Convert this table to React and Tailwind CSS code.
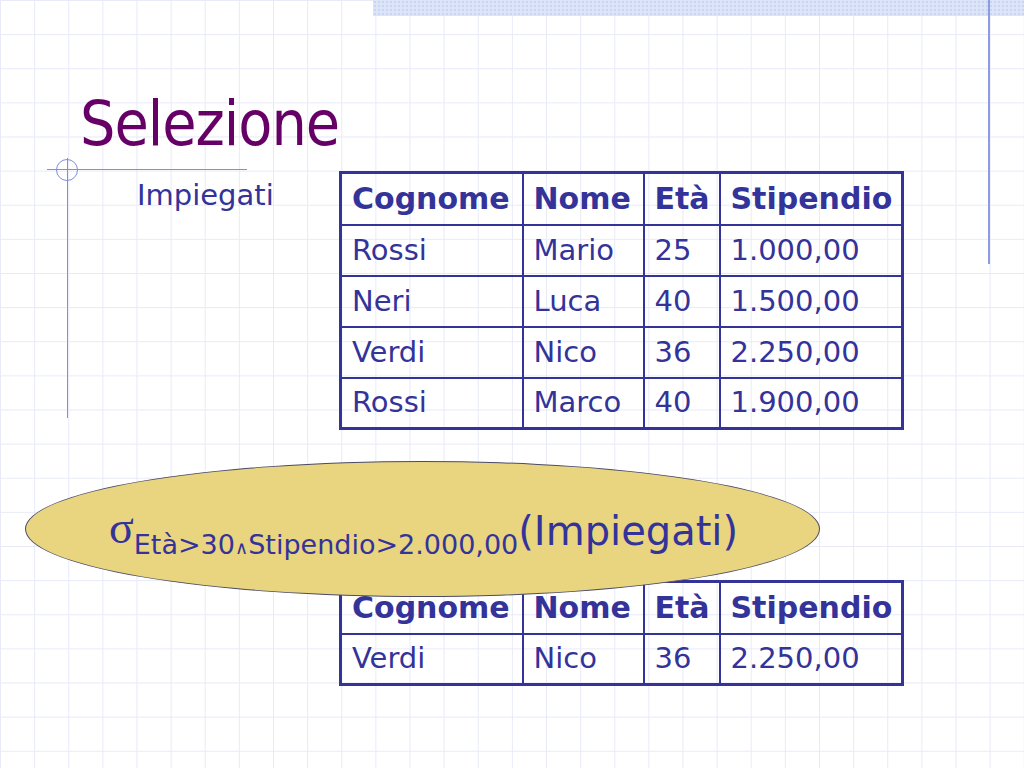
import React from 'react';

const rows = [
  ['Rossi', 'Mario', '25', '1.000,00'],
  ['Neri', 'Luca', '40', '1.500,00'],
  ['Verdi', 'Nico', '36', '2.250,00'],
  ['Rossi', 'Marco', '40', '1.900,00'],
];

const head = ['Cognome', 'Nome', 'Età', 'Stipendio'];
const widths = ['w-[182px]', 'w-[121px]', 'w-[76px]', 'w-[183px]'];

const Table = ({ data }) => (
  <table className="table-fixed border-collapse border-[3px] border-[#333399] text-[#333399] w-[562px]">
    <thead>
      <tr>
        {head.map((h, i) => (
          <th
            key={h}
            className={`${widths[i]} h-[52px] border-2 border-[#333399] pl-[10px] text-left font-bold text-[30px] leading-none`}
          >
            {h}
          </th>
        ))}
      </tr>
    </thead>
    <tbody>
      {data.map((r, ri) => (
        <tr key={ri}>
          {r.map((c, ci) => (
            <td key={ci} className="h-[51px] border-2 border-[#333399] pl-[10px] text-[29px] leading-none">
              {c}
            </td>
          ))}
        </tr>
      ))}
    </tbody>
  </table>
);

const App = () => {
  return (
    <div className="relative w-[1024px] h-[768px] overflow-hidden bg-white bg-[linear-gradient(to_right,#e8eaf8_1px,transparent_1px),linear-gradient(to_bottom,#e8eaf8_1px,transparent_1px)] bg-[size:34.13px_34.13px] font-['DejaVu_Sans',sans-serif]">
      {/* decorazioni del modello */}
      <div className="absolute left-[373px] right-0 top-0 h-[16px] bg-[#dce4f8] bg-[radial-gradient(#c9d5f3_1px,transparent_1px)] bg-[size:4px_4px]" />
      <div className="absolute left-[988px] top-0 w-[2px] h-[264px] bg-[#8d9be0]" />
      <div className="absolute left-[47px] top-[169px] w-[200px] h-px bg-[#7f8fe0]" />
      <div className="absolute left-[67px] top-[158px] w-px h-[260px] bg-[#7f8fe0]" />
      <div className="absolute left-[56px] top-[159px] w-[22px] h-[22px] rounded-full border border-[#7f8fe0]" />

      <div className="relative">
        <h1 className="ml-[80px] mt-[94px] h-[60px] text-[62px] leading-[60px] tracking-[-1px] text-[#660066] font-['DejaVu_Sans_Condensed','DejaVu_Sans',sans-serif]">
          Selezione
        </h1>

        <div className="flex mt-[17px]">
          <div className="w-[339px] pl-[137px] pt-[6px] text-[29px] leading-[36px] text-[#333399]">Impiegati</div>
          <Table data={rows} />
        </div>

        <div className="relative z-10 ml-[25px] mt-[31px] w-[795px] h-[136px] rounded-[50%] border border-[#4b4b66] bg-[#e9d480] flex items-center pl-[83px] pt-[4px] text-[#333399] whitespace-nowrap">
          <span className="font-['Liberation_Serif',serif] text-[46px] leading-none relative top-[-3px]">σ</span>
          <span className="text-[27px] leading-none relative top-[13px]">
            Età&gt;30<span className="text-[18px]">∧</span>Stipendio&gt;2.000,00
          </span>
          <span className="text-[40px] leading-none">(Impiegati)</span>
        </div>

        <div className="ml-[339px] mt-[-17px]">
          <Table data={[rows[2]]} />
        </div>
      </div>
    </div>
  );
};

export default App;
